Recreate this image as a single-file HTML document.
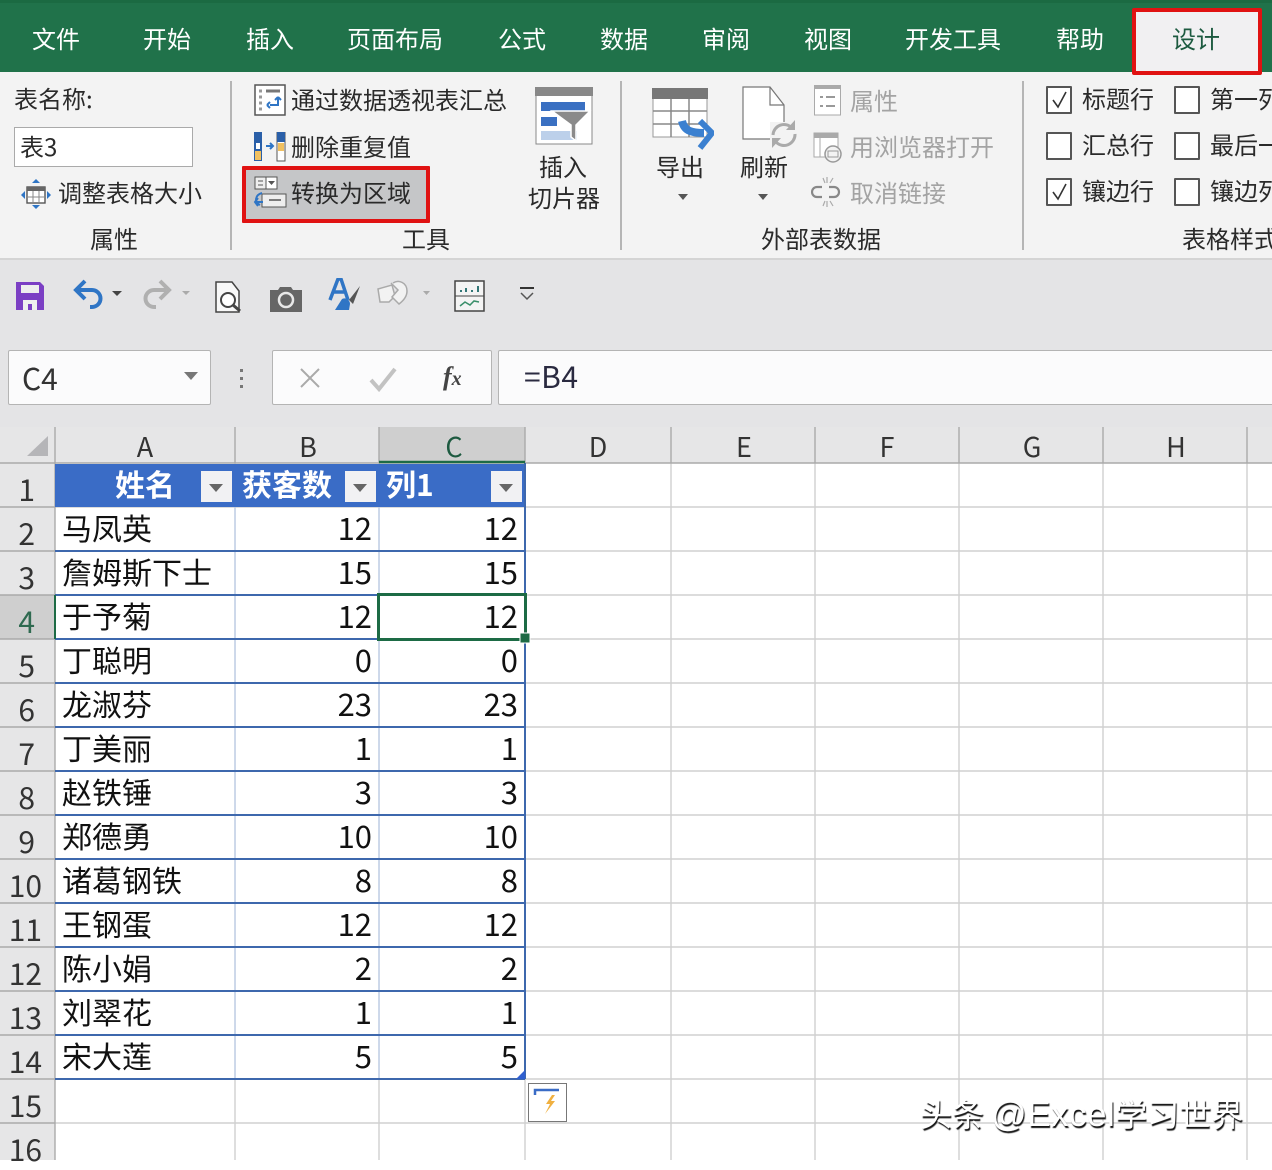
<!DOCTYPE html>
<html><head><meta charset="utf-8"><style>
html,body{margin:0;padding:0}
body{width:1272px;height:1160px;position:relative;overflow:hidden;background:#fff;font-family:"Liberation Sans","Noto Sans CJK SC",sans-serif}
.t{position:absolute;white-space:nowrap;line-height:1;font-family:"Noto Sans CJK SC","Liberation Sans",sans-serif;color:#222}
.b{position:absolute}
.tab{font-size:24px;color:#fff;top:26px}
.r{font-size:24px;color:#2a2a2a}
.g{color:#a3a3a3}
.c{font-size:30px;color:#111}
.n{position:absolute;font:31px/1 "Noto Sans CJK SC",sans-serif;color:#111;text-align:right}
.rh{position:absolute;width:42px;text-align:right;font:30px/1 "Noto Sans CJK SC",sans-serif;color:#333;left:0}
.s{width:35px}
.ch{position:absolute;top:432px;font:27px/1 "Noto Sans CJK SC",sans-serif;color:#333;text-align:center}
.cb{position:absolute;width:22px;height:24px;border:2px solid #555;background:#fff;border-radius:1px}
.th{font-size:30px;color:#fff;font-weight:700;top:468px}
.fb{position:absolute;top:471px;width:31px;height:31px;background:#f1f1f3}
.fb:after{content:"";position:absolute;left:8px;top:13px;border:7px solid transparent;border-top:8px solid #666;border-bottom:0}
</style></head><body>
<div class="b" style="left:0;top:0;width:1272px;height:72px;background:#20724a"></div>
<div class="b" style="left:0;top:0;width:1272px;height:3px;background:#1b6a42"></div>
<div class="t tab" style="left:32px">文件</div><div class="t tab" style="left:143px">开始</div><div class="t tab" style="left:246px">插入</div><div class="t tab" style="left:347px">页面布局</div><div class="t tab" style="left:498px">公式</div><div class="t tab" style="left:600px">数据</div><div class="t tab" style="left:702px">审阅</div><div class="t tab" style="left:804px">视图</div><div class="t tab" style="left:905px">开发工具</div><div class="t tab" style="left:1056px">帮助</div>

<div class="b" style="left:0;top:72px;width:1272px;height:187px;background:#f3f3f3"></div>
<div class="b" style="left:1136px;top:12px;width:122px;height:59px;background:#f1f0f2"></div>
<div class="b" style="left:1132px;top:8px;width:122px;height:59px;border:4px solid #e01212;border-radius:2px"></div>
<div class="t tab" style="left:1172px;color:#1d5a40">设计</div>
<div class="b" style="left:0;top:258px;width:1272px;height:2px;background:#d4d4d4"></div>
<div class="b" style="left:0;top:260px;width:1272px;height:167px;background:#e4e4e6"></div>
<div class="b" style="left:230px;top:81px;width:2px;height:169px;background:#b5b5b5"></div>
<div class="b" style="left:620px;top:81px;width:2px;height:169px;background:#b5b5b5"></div>
<div class="b" style="left:1022px;top:81px;width:2px;height:169px;background:#b5b5b5"></div>

<div class="t r" style="left:14px;top:86px">表名称:</div>
<div class="b" style="left:14px;top:127px;width:177px;height:38px;background:#fff;border:1px solid #aaa"></div>
<div class="t r" style="left:20px;top:134px">表3</div>
<div class="t r" style="left:58px;top:180px">调整表格大小</div>
<div class="t r" style="left:90px;top:226px">属性</div>
<svg class="b" style="left:18px;top:176px" width="36" height="36" viewBox="0 0 36 36"><rect x="9" y="11" width="18" height="16" fill="#fff" stroke="#555" stroke-width="1.4"/><rect x="9" y="11" width="18" height="4" fill="#666"/><path d="M9 21h18M15 15v12M21 15v12" stroke="#888"/><path d="M18 3l4 4h-8zM18 33l4-4h-8zM3 19l4-4v8zM33 19l-4-4v8z" fill="#2f75c5"/></svg>

<div class="t r" style="left:291px;top:87px">通过数据透视表汇总</div>
<div class="t r" style="left:291px;top:134px">删除重复值</div>
<div class="b" style="left:242px;top:166px;width:180px;height:49px;border:4px solid #e01212;background:#c5c6c8;border-radius:1px"></div>
<div class="t r" style="left:291px;top:180px">转换为区域</div>
<div class="t r" style="left:402px;top:226px">工具</div>
<div class="t r" style="left:539px;top:154px">插入</div>
<div class="t r" style="left:528px;top:185px">切片器</div>
<svg class="b" style="left:254px;top:84px" width="32" height="32" viewBox="0 0 32 32"><rect x="1" y="1" width="30" height="30" fill="#fff" stroke="#555" stroke-width="1.5"/><path d="M12 7h14" stroke="#777" stroke-width="3"/><path d="M5 7h3M5 13h3M5 19h3M5 25h3" stroke="#999" stroke-width="3"/><path d="M24 13v8h-8M13 21l3-3M13 21l3 3M24 13l-3 3M24 13l3 3" fill="none" stroke="#2f75c5" stroke-width="2"/></svg>
<svg class="b" style="left:254px;top:132px" width="32" height="30" viewBox="0 0 32 30"><rect x="0" y="0" width="8" height="29" fill="#2a5fa8"/><rect x="2" y="11" width="4" height="6" fill="#fff"/><rect x="1" y="19" width="6" height="9" fill="#f0c060"/><rect x="23" y="0" width="8" height="29" fill="#fff" stroke="#555"/><rect x="23" y="0" width="8" height="10" fill="#2a5fa8"/><rect x="24" y="11" width="6" height="8" fill="#f0c060"/><path d="M12 14h7M16 11l3 3-3 3" fill="none" stroke="#2f75c5" stroke-width="2"/></svg>
<svg class="b" style="left:252px;top:174px" width="36" height="36" viewBox="0 0 36 36"><rect x="3" y="3" width="11" height="12" fill="#eee" stroke="#555"/><rect x="14" y="3" width="11" height="12" fill="#fff" stroke="#555"/><path d="M16 7h7l-3.500 4z" fill="#555"/><path d="M6 7h5M6 11h5" stroke="#555"/><rect x="10" y="20" width="24" height="13" fill="#eee" stroke="#555"/><path d="M17 26h12" stroke="#555" stroke-width="1.500"/><path d="M10 19c-7 2-8 9-2 12M3 28h8M6 24l-3 4 3 4" fill="none" stroke="#2f75c5" stroke-width="2"/></svg>
<svg class="b" style="left:535px;top:87px" width="58" height="58" viewBox="0 0 58 58"><rect x="1" y="1" width="56" height="56" fill="#fff" stroke="#888"/><rect x="0" y="0" width="58" height="9" fill="#888"/><rect x="6" y="15" width="44" height="9" fill="#3a70c2"/><rect x="6" y="30" width="16" height="9" fill="#3a70c2"/><rect x="6" y="44" width="36" height="9" fill="#bcd0ea"/><path d="M17 24h38L41 38v16l-5-4V38z" fill="#8a8a8a" stroke="#fff" stroke-width="1.500"/></svg>

<svg class="b" style="left:652px;top:88px" width="62" height="62" viewBox="0 0 62 62"><rect x="1" y="0" width="54" height="49" fill="#fff" stroke="#999"/><rect x="0" y="0" width="56" height="11" fill="#777"/><path d="M1 23h54M1 36h54M19 11v38M37 11v38" stroke="#888" stroke-width="1.500"/><path d="M30 33c2 9 8 12 22 12" fill="none" stroke="#3b80d0" stroke-width="8"/><path d="M48 33l12 12-12 15" fill="none" stroke="#3b80d0" stroke-width="6"/></svg>
<div class="t r" style="left:656px;top:154px">导出</div>
<div class="b" style="left:678px;top:194px;border:5px solid transparent;border-top:6px solid #555;border-bottom:0"></div>
<svg class="b" style="left:740px;top:86px" width="58" height="62" viewBox="0 0 58 62"><path d="M3 1h27l14 18v34H3z" fill="#fff" stroke="#777" stroke-width="1.200"/><path d="M30 1v18h14" fill="none" stroke="#777" stroke-width="1.200"/><rect x="30" y="36" width="27" height="28" fill="#f3f3f3"/><path d="M33 49a11 11 0 0 1 19-7M55 48a11 11 0 0 1-19 8" fill="none" stroke="#aaa" stroke-width="3"/><path d="M55 34v10h-9zM32 62V52h9z" fill="#aaa"/></svg>
<div class="t r" style="left:740px;top:154px">刷新</div>
<div class="b" style="left:758px;top:194px;border:5px solid transparent;border-top:6px solid #555;border-bottom:0"></div>
<svg class="b" style="left:813px;top:84px" width="30" height="34" viewBox="0 0 30 34"><rect x="1.500" y="2" width="26" height="29" fill="#fff" stroke="#aaa"/><rect x="1" y="1" width="27" height="4" fill="#aaa"/><path d="M7 13h3M7 22h3M13 13h9M13 22h9" stroke="#999" stroke-width="2"/></svg>
<div class="t r g" style="left:850px;top:88px">属性</div>
<svg class="b" style="left:813px;top:132px" width="32" height="32" viewBox="0 0 32 32"><rect x="1" y="1" width="24" height="24" fill="#fff" stroke="#aaa"/><rect x="1" y="1" width="24" height="5" fill="#aaa"/><path d="M7 6v19" stroke="#aaa"/><circle cx="20" cy="22" r="8" fill="#f3f3f3" stroke="#999" stroke-width="1.500"/><rect x="15" y="19" width="10" height="6" fill="none" stroke="#999"/></svg>
<div class="t r g" style="left:850px;top:134px">用浏览器打开</div>
<svg class="b" style="left:811px;top:176px" width="32" height="32" viewBox="0 0 32 32"><path d="M11 11H6a5 5 0 0 0 0 10h5M18 11h5a5 5 0 0 1 0 10h-5" fill="none" stroke="#888" stroke-width="2.200"/><path d="M12 2l2 5M16 1v6M22 2l-3 5M12 30l2-5M16 31v-6M22 30l-3-5" stroke="#aaa" stroke-width="1.200"/></svg>
<div class="t r g" style="left:850px;top:180px">取消链接</div>
<div class="t r" style="left:761px;top:226px">外部表数据</div>

<div class="cb" style="left:1046px;top:86px"><svg width="22" height="24" style="display:block"><path d="M5 12l5 7 8-15" fill="none" stroke="#333" stroke-width="1.600"/></svg></div>
<div class="cb" style="left:1046px;top:132px"></div>
<div class="cb" style="left:1046px;top:178px"><svg width="22" height="24" style="display:block"><path d="M5 12l5 7 8-15" fill="none" stroke="#333" stroke-width="1.600"/></svg></div>
<div class="cb" style="left:1174px;top:86px"></div><div class="cb" style="left:1174px;top:132px"></div><div class="cb" style="left:1174px;top:178px"></div>
<div class="t r" style="left:1082px;top:86px">标题行</div><div class="t r" style="left:1082px;top:132px">汇总行</div><div class="t r" style="left:1082px;top:178px">镶边行</div>
<div class="t r" style="left:1210px;top:86px">第一列</div><div class="t r" style="left:1210px;top:132px">最后一列</div><div class="t r" style="left:1210px;top:178px">镶边列</div>
<div class="t r" style="left:1182px;top:226px">表格样式</div>

<svg class="b" style="left:14px;top:280px" width="32" height="32" viewBox="0 0 32 32"><path d="M2 2h24l4 4v24H2z" fill="#7b3fc4"/><rect x="7" y="5" width="18" height="8" fill="#eee"/><rect x="9" y="20" width="14" height="10" fill="#eee"/><rect x="14" y="24" width="4" height="6" fill="#7b3fc4"/></svg>
<svg class="b" style="left:72px;top:278px" width="54" height="32" viewBox="0 0 54 32"><path d="M6 12h14a8.500 8.500 0 0 1 0 17h-2" fill="none" stroke="#2f75c5" stroke-width="4"/><path d="M13 3L4 12l9 9" fill="none" stroke="#2f75c5" stroke-width="4"/><path d="M40 13h10l-5 5z" fill="#444"/></svg>
<svg class="b" style="left:142px;top:278px" width="52" height="32" viewBox="0 0 52 32"><path d="M24 12H12a8.500 8.500 0 0 0 0 17h2" fill="none" stroke="#b0b0b0" stroke-width="4"/><path d="M18 3l9 9-9 9" fill="none" stroke="#b0b0b0" stroke-width="4"/><path d="M40 13h8l-4 4z" fill="#aaa"/></svg>
<svg class="b" style="left:214px;top:280px" width="32" height="34" viewBox="0 0 32 34"><path d="M2 2h16l7 9v21H2z" fill="#f8f8f8" stroke="#444" stroke-width="1.500"/><circle cx="14" cy="20" r="7" fill="#fff" stroke="#444" stroke-width="2"/><path d="M19 25l7 6" stroke="#444" stroke-width="3"/></svg>
<svg class="b" style="left:269px;top:286px" width="34" height="26" viewBox="0 0 34 26"><path d="M1 4h8l2-3h11l2 3h9v22H1z" fill="#666"/><circle cx="17" cy="14" r="7" fill="#666" stroke="#e8e8e8" stroke-width="2.500"/></svg>
<svg class="b" style="left:328px;top:278px" width="34" height="34" viewBox="0 0 34 34"><path d="M2 22L10 1h3l7 21M6 14h11" fill="none" stroke="#2f75c5" stroke-width="3.500"/><path d="M32 8L21 22l4 4z" fill="#555"/><path d="M7 32l7-11c4-2 8 1 8 5l-1 6z" fill="#2f75c5"/></svg>
<svg class="b" style="left:376px;top:279px" width="62" height="30" viewBox="0 0 62 30"><path d="M2 10l14-4 3 11-6 6-9 0z" fill="#f2f2f2" stroke="#aaa" stroke-width="1.500"/><path d="M17 4c6-4 14 0 14 8 0 6-4 10-8 13l-7-7 6-7-7-7" fill="#f2f2f2" stroke="#aaa" stroke-width="1.500"/><path d="M47 12h7l-3.500 4z" fill="#aaa"/></svg>
<svg class="b" style="left:454px;top:280px" width="31" height="32" viewBox="0 0 31 32"><rect x="1" y="1" width="29" height="30" fill="#f4f4f4" stroke="#444" stroke-width="1.500"/><path d="M1 16h29" stroke="#444"/><path d="M7 10v2M12 8v4M18 10v2M24 6v6" stroke="#377" stroke-width="2"/><path d="M6 26l5-4 5 3 4-4 5 1" fill="none" stroke="#3a8f6a" stroke-width="1.500"/></svg>
<svg class="b" style="left:518px;top:287px" width="18" height="14" viewBox="0 0 18 14"><path d="M2 1h14" stroke="#333" stroke-width="2"/><path d="M3 6l6 6 6-6" fill="none" stroke="#555" stroke-width="1.500"/></svg>

<div class="b" style="left:8px;top:350px;width:201px;height:53px;background:#fbfbfc;border:1px solid #b4b4b4;border-radius:2px"></div>
<div class="t" style="left:22px;top:362px;font:30px/1 'Noto Sans CJK SC',sans-serif;color:#333">C4</div>
<div class="b" style="left:184px;top:372px;border:7px solid transparent;border-top:8px solid #777;border-bottom:0"></div>
<div class="b" style="left:240px;top:369px;width:3px;height:3px;background:#777;box-shadow:0 8px #777,0 16px #777"></div>
<div class="b" style="left:272px;top:350px;width:218px;height:53px;background:#fbfbfc;border:1px solid #b4b4b4;border-radius:2px"></div>
<svg class="b" style="left:298px;top:366px" width="24" height="24"><path d="M3 3l18 18M21 3L3 21" stroke="#aaa" stroke-width="2"/></svg>
<svg class="b" style="left:368px;top:366px" width="30" height="26"><path d="M3 14l8 9L27 3" fill="none" stroke="#c2c2c2" stroke-width="4"/></svg>
<div class="t" style="left:443px;top:364px;font:italic 700 26px/1 'Liberation Serif',serif;color:#444">f<span style="font-size:20px">x</span></div>
<div class="b" style="left:498px;top:350px;width:790px;height:53px;background:#fbfbfc;border:1px solid #b4b4b4;border-radius:2px"></div>
<div class="t" style="left:524px;top:360px;font:30px/1 'Noto Sans CJK SC',sans-serif;color:#2a2a40;letter-spacing:.5px">=B4</div>

<svg class="b" style="left:0;top:427px" width="1272" height="733" viewBox="0 427 1272 733">
<rect x="0" y="427" width="1272" height="36" fill="#e6e6e7"/>
<rect x="0" y="463" width="55" height="697" fill="#e6e6e7"/>
<rect x="0" y="595" width="55" height="44" fill="#cfcfcf"/>
<rect x="379" y="427" width="146" height="36" fill="#cfcfcf"/>
<path d="M48 436v20H27z" fill="#b5b5b8"/>
<g stroke="#d0d0d0" stroke-width="1.400" fill="none">
<path d="M55 507H1272M55 551H1272M55 595H1272M55 639H1272M55 683H1272M55 727H1272M55 771H1272M55 815H1272M55 859H1272M55 903H1272M55 947H1272M55 991H1272M55 1035H1272M55 1079H1272M55 1123H1272"/>
<path d="M235 463V1160M379 463V1160M525 463V1160M671 463V1160M815 463V1160M959 463V1160M1103 463V1160M1247 463V1160"/>
</g>
<g stroke="#aaa" stroke-width="1.400" fill="none">
<path d="M0 463H1272M55 427V1160"/>
<path d="M235 427V463M379 427V463M525 427V463M671 427V463M815 427V463M959 427V463M1103 427V463M1247 427V463"/>
<path d="M0 507H55M0 551H55M0 595H55M0 639H55M0 683H55M0 727H55M0 771H55M0 815H55M0 859H55M0 903H55M0 947H55M0 991H55M0 1035H55M0 1079H55M0 1123H55"/>
</g>
<rect x="55" y="464" width="470" height="43" fill="#3a6cc6"/>
<g stroke="#b9cce8" stroke-width="1.200"><path d="M235 507V1079M379 507V1079"/></g>
<g stroke="#3e68ad" stroke-width="2" fill="none">
<path d="M55 551H525M55 595H525M55 639H525M55 683H525M55 727H525M55 771H525M55 815H525M55 859H525M55 903H525M55 947H525M55 991H525M55 1035H525M55 1079H525M525 463V1079"/>
</g>
<path d="M379 462H525" stroke="#1d6b45" stroke-width="2.500"/>
<path d="M55 595V639" stroke="#1d6b45" stroke-width="2"/>
<rect x="378.500" y="594.500" width="147" height="45" fill="none" stroke="#1d6b45" stroke-width="3"/>
<rect x="520" y="633" width="10" height="10" fill="#1d6b45" stroke="#fff"/>
<path d="M525 1070v9h-9z" fill="#2f5fd0"/>
<rect x="528.500" y="1083.500" width="38" height="38" fill="#fff" stroke="#777"/>
<path d="M535 1095v-5h24" fill="none" stroke="#3a6cc6" stroke-width="2.500"/>
<path d="M552 1095l-6 9h4l-5 10 10-13h-4l4-6z" fill="#f0b040"/>
</svg>

<div class="ch" style="left:55px;width:180px">A</div><div class="ch" style="left:235px;width:146px">B</div><div class="ch" style="left:379px;width:150px;color:#1d5a40">C</div><div class="ch" style="left:525px;width:146px">D</div><div class="ch" style="left:671px;width:146px">E</div><div class="ch" style="left:815px;width:144px">F</div><div class="ch" style="left:959px;width:146px">G</div><div class="ch" style="left:1103px;width:146px">H</div>

<div class="rh s" style="top:473px">1</div><div class="rh s" style="top:517px">2</div><div class="rh s" style="top:561px">3</div><div class="rh s" style="top:605px;color:#2f6a50">4</div><div class="rh s" style="top:649px">5</div><div class="rh s" style="top:693px">6</div><div class="rh s" style="top:737px">7</div><div class="rh s" style="top:781px">8</div><div class="rh s" style="top:825px">9</div><div class="rh" style="top:869px">10</div><div class="rh" style="top:913px">11</div><div class="rh" style="top:957px">12</div><div class="rh" style="top:1001px">13</div><div class="rh" style="top:1045px">14</div><div class="rh" style="top:1089px">15</div><div class="rh" style="top:1133px">16</div>

<div class="t th" style="left:115px">姓名</div><div class="t th" style="left:242px">获客数</div><div class="t th" style="left:386px">列1</div>
<div class="fb" style="left:201px"></div><div class="fb" style="left:345px"></div><div class="fb" style="left:491px"></div>

<div class="t c" style="left:62px;top:512px">马凤英</div><div class="n" style="left:235px;width:137px;top:511px">12</div><div class="n" style="left:379px;width:139px;top:511px">12</div>
<div class="t c" style="left:62px;top:556px">詹姆斯下士</div><div class="n" style="left:235px;width:137px;top:555px">15</div><div class="n" style="left:379px;width:139px;top:555px">15</div>
<div class="t c" style="left:62px;top:600px">于予菊</div><div class="n" style="left:235px;width:137px;top:599px">12</div><div class="n" style="left:379px;width:139px;top:599px">12</div>
<div class="t c" style="left:62px;top:644px">丁聪明</div><div class="n" style="left:235px;width:137px;top:643px">0</div><div class="n" style="left:379px;width:139px;top:643px">0</div>
<div class="t c" style="left:62px;top:688px">龙淑芬</div><div class="n" style="left:235px;width:137px;top:687px">23</div><div class="n" style="left:379px;width:139px;top:687px">23</div>
<div class="t c" style="left:62px;top:732px">丁美丽</div><div class="n" style="left:235px;width:137px;top:731px">1</div><div class="n" style="left:379px;width:139px;top:731px">1</div>
<div class="t c" style="left:62px;top:776px">赵铁锤</div><div class="n" style="left:235px;width:137px;top:775px">3</div><div class="n" style="left:379px;width:139px;top:775px">3</div>
<div class="t c" style="left:62px;top:820px">郑德勇</div><div class="n" style="left:235px;width:137px;top:819px">10</div><div class="n" style="left:379px;width:139px;top:819px">10</div>
<div class="t c" style="left:62px;top:864px">诸葛钢铁</div><div class="n" style="left:235px;width:137px;top:863px">8</div><div class="n" style="left:379px;width:139px;top:863px">8</div>
<div class="t c" style="left:62px;top:908px">王钢蛋</div><div class="n" style="left:235px;width:137px;top:907px">12</div><div class="n" style="left:379px;width:139px;top:907px">12</div>
<div class="t c" style="left:62px;top:952px">陈小娟</div><div class="n" style="left:235px;width:137px;top:951px">2</div><div class="n" style="left:379px;width:139px;top:951px">2</div>
<div class="t c" style="left:62px;top:996px">刘翠花</div><div class="n" style="left:235px;width:137px;top:995px">1</div><div class="n" style="left:379px;width:139px;top:995px">1</div>
<div class="t c" style="left:62px;top:1040px">宋大莲</div><div class="n" style="left:235px;width:137px;top:1039px">5</div><div class="n" style="left:379px;width:139px;top:1039px">5</div>

<div class="t" style="left:920px;top:1097px;font-size:32px;color:#fff;text-shadow:1px 2px 1px #111">头条 <span style="font:35px/1 'Liberation Sans',sans-serif;letter-spacing:.5px">@Excel</span>学习世界</div>
</body></html>
